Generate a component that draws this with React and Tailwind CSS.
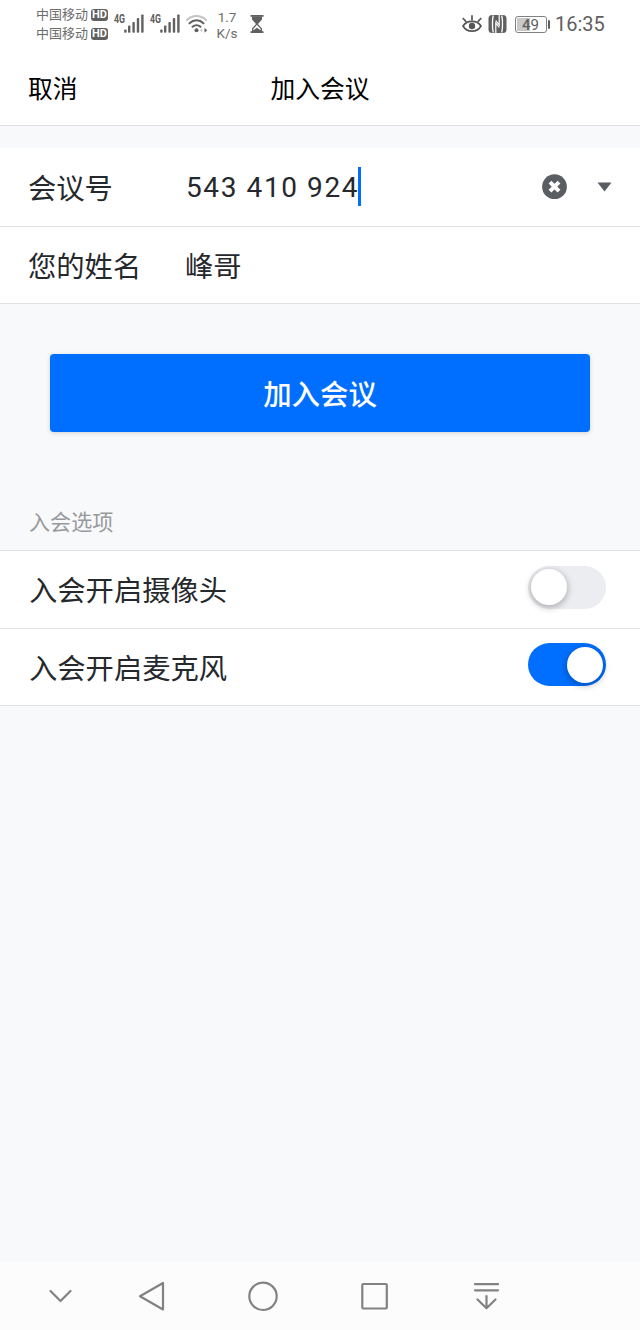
const Carrier = () => {
  return (
    <div className="flex items-center gap-x-[3px] h-[19px]">
      <span className="text-[13px] leading-[19px]">中国移动</span>
      <span className="w-[17px] h-[12px] rounded-[3px] bg-[#606060] text-white text-[11px] leading-[12px] font-bold text-center">
        HD
      </span>
    </div>
  );
};

const Signal = () => {
  return (
    <svg width="30" height="22" viewBox="0 0 30 22" fill="#606060">
      <text x="0" y="11" fontSize="12" fontWeight="700" textLength="11" lengthAdjust="spacingAndGlyphs">
        4G
      </text>
      <rect x="10.2" y="17.5" width="2.4" height="3.3" rx="0.8" />
      <rect x="14" y="13.5" width="2.4" height="7.3" rx="0.8" />
      <rect x="18.4" y="10" width="2.4" height="10.8" rx="0.8" />
      <rect x="22.8" y="6" width="2.4" height="14.8" rx="0.8" />
      <rect x="27.2" y="2.5" width="2.4" height="18.3" rx="0.8" />
    </svg>
  );
};

const Wifi = () => {
  return (
    <svg width="22" height="20" viewBox="0 0 22 20" fill="none" strokeWidth="2" strokeLinecap="round">
      <path d="M1 6C6.500 .8 14.500 .8 20 6" stroke="#c4c4c4" />
      <path d="M3.500 9.200C7.500 5.400 13.500 5.400 17.500 9.200" stroke="#606060" />
      <path d="M6.500 12.800C8.800 10.600 12.200 10.600 14.500 12.800" stroke="#606060" />
      <circle cx="10.500" cy="16.300" r="2" fill="#606060" />
      <path d="M16.200 14.200v4l-2.200-2z" fill="#c4c4c4" />
      <path d="M18.500 13.800v5l2.700-2.500z" fill="#606060" />
    </svg>
  );
};

const Hourglass = () => {
  return (
    <svg width="14" height="20" viewBox="0 0 14 20" fill="#606060">
      <rect x="0.500" y="1" width="13" height="1.800" />
      <rect x="0.500" y="17.200" width="13" height="1.800" />
      <path d="M2 2.500h10v3L8 10l4 4.500V18H2v-3.500L6 10 2 5.500z" />
      <path d="M7 10.800l3.700 4.200v1.300L7 13.800l-3.700 2.500V15z" fill="white" />
    </svg>
  );
};

const Eye = () => {
  return (
    <svg width="20" height="20" viewBox="0 0 20 20" fill="none" stroke="#555555" strokeLinecap="round">
      <path d="M1 12C5 5.800 15 5.800 19 12C15 18.800 5 18.800 1 12z" strokeWidth="1.700" />
      <circle cx="10" cy="12" r="3.200" fill="#555555" stroke="none" />
      <path d="M10 1.800v4M1.200 4.500L3.800 7.300M18.800 4.500l-2.600 2.800" strokeWidth="1.700" />
    </svg>
  );
};

const Nfc = () => {
  return (
    <svg width="19" height="20" viewBox="0 0 19 20">
      <rect x="0.500" y="1" width="18" height="18" rx="3.500" fill="#606060" />
      <path
        d="M5.300 1.500C4.200 5 4.200 15 5.300 18.500M13.700 1.500C14.800 5 14.800 15 13.700 18.500"
        fill="none"
        stroke="white"
        strokeWidth="1.300"
      />
      <path d="M7.800 19V9l3.400 4.500M11.200 1v10L7.800 6.500" fill="none" stroke="white" strokeWidth="1.200" />
    </svg>
  );
};

const Row = ({ children, className = "" }) => {
  return (
    <div className={`flex items-center bg-white border-b border-[#e0e1e4] pl-[29px] ${className}`}>
      {children}
    </div>
  );
};

const Toggle = ({ on }) => {
  return (
    <div
      className={`w-[78px] h-[43px] rounded-full flex items-center px-[3px] mr-[34px] mb-[5px] ml-auto ${
        on ? "bg-[#006fff] justify-end" : "bg-[#ecedf1] justify-start"
      }`}
    >
      <div className="w-9 h-9 rounded-full bg-white shadow-[0_2px_6px_1px_rgba(0,0,0,0.25)]" />
    </div>
  );
};

const App = () => {
  return (
    <main className="w-[640px] h-[1330px] flex flex-col bg-[#f7f9fb] text-[#25282c] font-[Roboto,'Noto_Sans_CJK_SC',sans-serif] whitespace-nowrap">
      {/* Status bar - starts */}
      <div className="h-[50px] shrink-0 flex items-start bg-white text-[#606060]">
        <div className="ml-9 mt-[5px] w-[72px] text-[#6c6c6c]">
          <Carrier />
          <Carrier />
        </div>
        <div className="flex ml-1.5 mt-3 gap-x-1.5">
          <Signal />
          <Signal />
        </div>
        <div className="ml-1.5 mt-3.5">
          <Wifi />
        </div>
        <div className="ml-[7px] mt-[9px] w-6 text-center text-[13.5px] leading-4 text-[#6c6c6c]">
          <p>1.7</p>
          <p>K/s</p>
        </div>
        <div className="ml-[11px] mt-3.5">
          <Hourglass />
        </div>
        <div className="flex items-center ml-auto mr-[34px] mt-3.5 h-5">
          <Eye />
          <div className="ml-1.5">
            <Nfc />
          </div>
          <div className="ml-2 w-8 h-[17px] border border-[#808080] rounded-[3px] p-px flex">
            <div className="w-[13px] h-full bg-[#c9c9c9]" />
            <span className="-ml-[8px] text-[15px] leading-[14px]">
              <b className="font-medium">4</b>9
            </span>
          </div>
          <div className="ml-px w-[2px] h-[9px] rounded-sm bg-[#606060]" />
          <span className="ml-[5px] w-[51px] text-[20px] leading-5">16:35</span>
        </div>
      </div>
      {/* Status bar - ends */}

      {/* Header - starts */}
      <header className="h-[76px] shrink-0 grid grid-cols-3 items-center bg-white border-b border-[#e0e1e4] px-[28px] pt-[5px] text-[24.8px] leading-none text-black">
        <span>取消</span>
        <h1 className="text-center">加入会议</h1>
      </header>
      {/* Header - ends */}

      {/* Form - starts */}
      <section className="mt-[22px] text-[28.3px] leading-none">
        <Row className="h-[79px]">
          <label className="w-[157px] -ml-px pt-1.5">会议号</label>
          <span className="ml-px text-[28px] tracking-[1.6px] pt-0.5">543 410 924</span>
          <span className="-ml-px mb-px w-[3px] h-[39px] bg-[#006fff]" />
          <svg className="ml-auto" width="26" height="26" viewBox="0 0 26 26">
            <circle cx="12.500" cy="12.700" r="12.400" fill="#5a5d62" />
            <path d="M8 8.200l9 9M17 8.200l-9 9" stroke="white" strokeWidth="4" />
          </svg>
          <svg className="ml-[29px] mr-[28px]" width="15" height="10" viewBox="0 0 15 10">
            <path d="M.5.500h14L7.500 9.500z" fill="#5a5d62" />
          </svg>
        </Row>
        <Row className="h-[77px]">
          <label className="w-[157px] -ml-px pt-[7px]">您的姓名</label>
          <span className="pt-[7px]">峰哥</span>
        </Row>
      </section>
      {/* Form - ends */}

      <button className="mt-[50px] mx-[50px] h-[78px] shrink-0 rounded-[4px] bg-[#006fff] pt-1.5 text-white text-[28.4px] leading-none font-medium shadow-[0_1px_4px_rgba(0,0,0,0.16)]">
        加入会议
      </button>

      {/* Options - starts */}
      <h2 className="mt-[79px] h-[40px] shrink-0 border-b border-[#e0e1e4] pl-[29px] text-[21.1px] leading-6 text-[#97999c]">
        入会选项
      </h2>
      <section className="text-[28.3px] leading-none">
        <Row className="h-[78px]">
          <span className="pt-1.5">入会开启摄像头</span>
          <Toggle />
        </Row>
        <Row className="h-[77px]">
          <span className="pt-1.5">入会开启麦克风</span>
          <Toggle on />
        </Row>
      </section>
      {/* Options - ends */}

      {/* Navigation bar - starts */}
      <nav className="mt-auto h-[68px] shrink-0 flex items-center bg-[#fcfcfc] pl-[44px]">
        <svg width="32" height="32" viewBox="0 0 32 32" fill="none" stroke="#828282" strokeWidth="2.200" strokeLinecap="round" strokeLinejoin="round">
          <path d="M6.500 11L16.500 21 26.500 11" />
        </svg>
        <svg className="ml-[60px]" width="32" height="32" viewBox="0 0 32 32" fill="none" stroke="#828282" strokeWidth="2.200" strokeLinejoin="round">
          <path d="M4 16.300L27 3v26.500z" />
        </svg>
        <svg className="ml-[79px]" width="32" height="32" viewBox="0 0 32 32" fill="none" stroke="#828282" strokeWidth="2.200">
          <circle cx="16" cy="16.300" r="13.700" />
        </svg>
        <svg className="ml-[79px]" width="32" height="32" viewBox="0 0 32 32" fill="none" stroke="#828282" strokeWidth="2.200">
          <rect x="4.300" y="4" width="24.500" height="24.500" rx="1" />
        </svg>
        <svg className="ml-[80px]" width="32" height="32" viewBox="0 0 32 32" fill="none" stroke="#828282" strokeWidth="2.200" strokeLinecap="round" strokeLinejoin="round">
          <path d="M5 4.200h23M5 10.300h23M16.500 16v12M7.500 19.500l9 8.700 9-8.700" />
        </svg>
      </nav>
      {/* Navigation bar - ends */}
    </main>
  );
};

export default App;
